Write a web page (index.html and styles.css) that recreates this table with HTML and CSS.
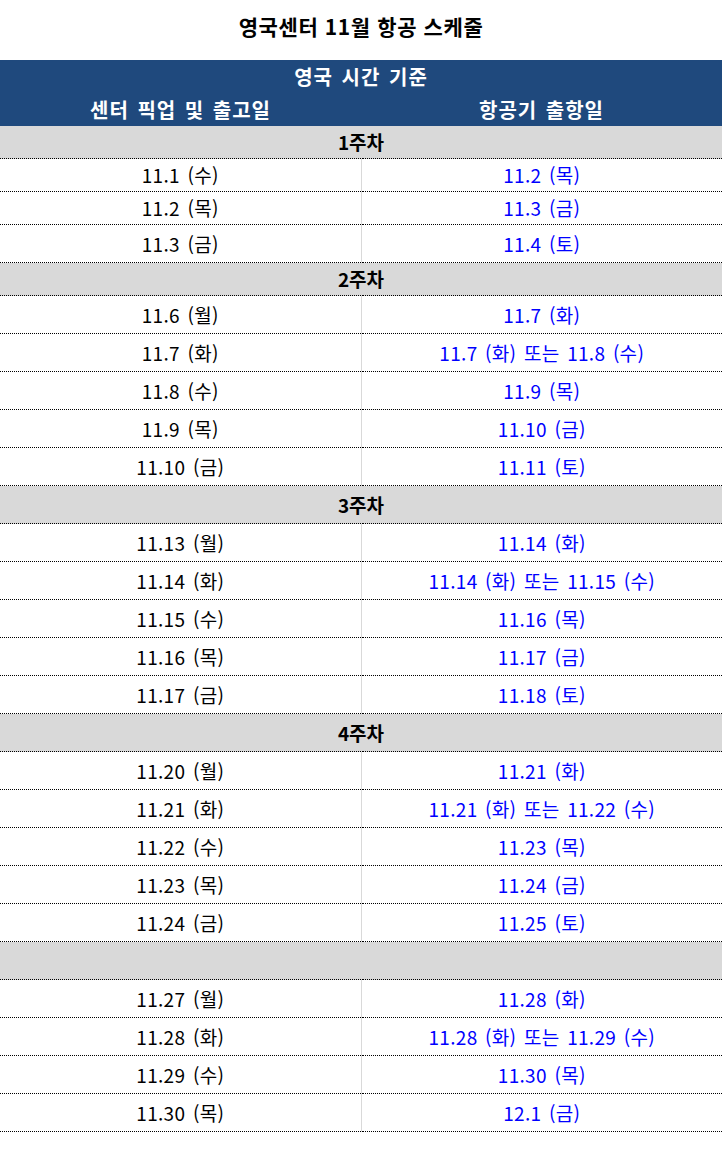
FILE: index.html
```html
<!DOCTYPE html>
<html lang="ko">
<head>
<meta charset="utf-8">
<title>영국센터 11월 항공 스케줄</title>
<link rel="stylesheet" href="styles.css">
</head>
<body>
<h1 class="title">영국센터 11월 항공 스케줄</h1>
<table class="sched">
  <thead>
    <tr class="hrow"><th colspan="2">영국 시간 기준</th></tr>
    <tr class="hrow"><th>센터 픽업 및 출고일</th><th>항공기 출항일</th></tr>
  </thead>
  <tbody>
    <tr class="week short"><td colspan="2">1주차</td></tr>
    <tr class="short"><td>11.1 (수)</td><td class="air">11.2 (목)</td></tr>
    <tr class="short"><td>11.2 (목)</td><td class="air">11.3 (금)</td></tr>
    <tr><td>11.3 (금)</td><td class="air">11.4 (토)</td></tr>
    <tr class="week short"><td colspan="2">2주차</td></tr>
    <tr><td>11.6 (월)</td><td class="air">11.7 (화)</td></tr>
    <tr><td>11.7 (화)</td><td class="air">11.7 (화) 또는 11.8 (수)</td></tr>
    <tr><td>11.8 (수)</td><td class="air">11.9 (목)</td></tr>
    <tr><td>11.9 (목)</td><td class="air">11.10 (금)</td></tr>
    <tr><td>11.10 (금)</td><td class="air">11.11 (토)</td></tr>
    <tr class="week"><td colspan="2">3주차</td></tr>
    <tr><td>11.13 (월)</td><td class="air">11.14 (화)</td></tr>
    <tr><td>11.14 (화)</td><td class="air">11.14 (화) 또는 11.15 (수)</td></tr>
    <tr><td>11.15 (수)</td><td class="air">11.16 (목)</td></tr>
    <tr><td>11.16 (목)</td><td class="air">11.17 (금)</td></tr>
    <tr><td>11.17 (금)</td><td class="air">11.18 (토)</td></tr>
    <tr class="week"><td colspan="2">4주차</td></tr>
    <tr><td>11.20 (월)</td><td class="air">11.21 (화)</td></tr>
    <tr><td>11.21 (화)</td><td class="air">11.21 (화) 또는 11.22 (수)</td></tr>
    <tr><td>11.22 (수)</td><td class="air">11.23 (목)</td></tr>
    <tr><td>11.23 (목)</td><td class="air">11.24 (금)</td></tr>
    <tr><td>11.24 (금)</td><td class="air">11.25 (토)</td></tr>
    <tr class="week"><td colspan="2"></td></tr>
    <tr><td>11.27 (월)</td><td class="air">11.28 (화)</td></tr>
    <tr><td>11.28 (화)</td><td class="air">11.28 (화) 또는 11.29 (수)</td></tr>
    <tr><td>11.29 (수)</td><td class="air">11.30 (목)</td></tr>
    <tr><td>11.30 (목)</td><td class="air">12.1 (금)</td></tr>
  </tbody>
</table>
</body>
</html>
```

FILE: styles.css
```css
html, body {
  margin: 0;
  padding: 0;
  background: #ffffff;
}
body {
  font-family: "Noto Sans CJK KR", "Noto Sans", sans-serif;
  color: #000000;
  width: 722px;
}
.title {
  margin: 0;
  height: 60px;
  line-height: 52px;
  font-size: 21px;
  font-weight: 700;
  letter-spacing: 0.6px;
  text-align: center;
}
.sched {
  width: 722px;
  border-collapse: collapse;
  table-layout: fixed;
}
.sched th {
  background: #1f497d;
  color: #ffffff;
  font-size: 20px;
  font-weight: 700;
  letter-spacing: 1px;
  word-spacing: 2px;
  height: 33px;
  line-height: 22px;
  padding: 0;
  text-align: center;
  vertical-align: middle;
  width: 50%;
}
.sched td {
  height: 37px;
  padding: 0;
  text-align: center;
  vertical-align: middle;
  font-size: 19px;
  letter-spacing: 0.3px;
  word-spacing: 2px;
  border-bottom: 1px dotted #000000;
  line-height: 20px;
}
.sched td + td {
  border-left: 1px solid #d9d9d9;
}
.sched tr.short td {
  height: 32px;
}
.sched tr.week td {
  background: #d9d9d9;
  font-weight: 700;
  font-size: 19px;
  letter-spacing: 0;
}
.sched td.air {
  color: #0000ff;
}
```
